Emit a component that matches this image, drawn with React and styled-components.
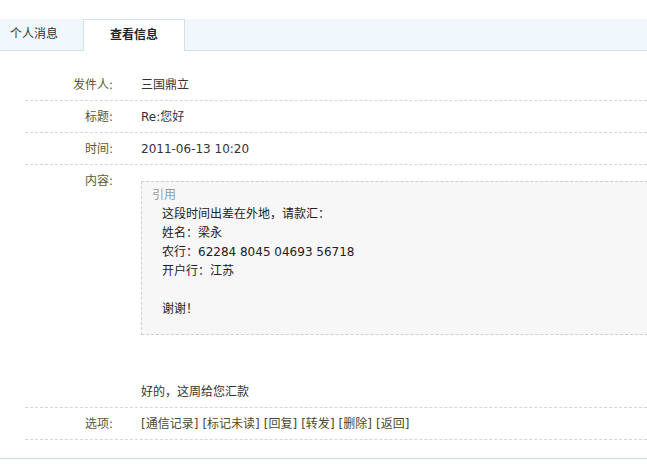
import React from "react";
import styled, { createGlobalStyle } from "styled-components";

const Global = createGlobalStyle`
  html, body { margin: 0; padding: 0; background: #fff; overflow: hidden; }
  body {
    font-family: "DejaVu Sans", "Noto Sans CJK SC", sans-serif;
    font-size: 12px;
    color: #333;
  }
`;

const Page = styled.div`
  width: 647px;
  padding-top: 19px;
`;

const TabBar = styled.div`
  display: flex;
  height: 31px;
  background: #f0f8fe;
  border-bottom: 1px solid #d7dee3;
`;

const Tab = styled.div`
  box-sizing: border-box;
  width: ${(p) => p.$w}px;
  line-height: 31px;
  height: ${(p) => (p.$active ? 32 : 31)}px;
  padding-left: ${(p) => (p.$active ? 0 : 10)}px;
  text-align: ${(p) => (p.$active ? "center" : "left")};
  font-weight: ${(p) => (p.$active ? "bold" : "normal")};
  color: ${(p) => (p.$active ? "#222" : "#333")};
  background: ${(p) => (p.$active ? "#fff" : "transparent")};
  border: ${(p) => (p.$active ? "1px solid #d4dfe6" : "none")};
  border-bottom: none;
`;

const Table = styled.div`
  margin: 18px 0 0 25px;
`;

const Row = styled.div`
  display: flex;
  align-items: flex-start;
  padding: 7px 0 6px;
  line-height: 18px;
  border-bottom: 1px dashed #d6d6d6;
`;

const Label = styled.div`
  flex: 0 0 88px;
  text-align: right;
  color: #5a5a32;
`;

const Value = styled.div`
  flex: 1;
  min-width: 0;
  overflow: hidden;
  padding-left: 28px;
  white-space: nowrap;
`;

const Quote = styled.div`
  margin-top: 9px;
  width: 540px;
  background: #f7f7f7;
  border: 1px dashed #cfcfcf;
  padding: 4px 10px 15px;
`;

const QuoteTitle = styled.div`
  color: #9a9a9a;
  line-height: 19px;
`;

const QuoteBody = styled.div`
  padding-left: 10px;
  line-height: 19px;
  color: #222;
`;

const Reply = styled.div`
  margin-top: 48px;
`;

const Links = styled.div`
  display: flex;
  gap: 4px;
`;

const Link = styled.a`
  color: #4a4a2a;
  text-decoration: none;
  cursor: pointer;
`;

const BottomRule = styled.div`
  margin-top: 18px;
  border-top: 1px solid #d2e3e3;
`;

const quoteLines = [
  "这段时间出差在外地，请款汇：",
  "姓名：梁永",
  "农行：62284 8045 04693 56718",
  "开户行：江苏",
  "\u00a0",
  "谢谢！",
];

const links = ["通信记录", "标记未读", "回复", "转发", "删除", "返回"];

export default function App() {
  return (
    <>
      <Global />
      <Page>
        <TabBar>
          <Tab $w={83}>个人消息</Tab>
          <Tab $w={102} $active>
            查看信息
          </Tab>
        </TabBar>
        <Table>
          <Row>
            <Label>发件人:</Label>
            <Value>三国鼎立</Value>
          </Row>
          <Row>
            <Label>标题:</Label>
            <Value>Re:您好</Value>
          </Row>
          <Row>
            <Label>时间:</Label>
            <Value>2011-06-13 10:20</Value>
          </Row>
          <Row>
            <Label>内容:</Label>
            <Value>
              <Quote>
                <QuoteTitle>引用</QuoteTitle>
                <QuoteBody>
                  {quoteLines.map((l, i) => (
                    <div key={i}>{l}</div>
                  ))}
                </QuoteBody>
              </Quote>
              <Reply>好的，这周给您汇款</Reply>
            </Value>
          </Row>
          <Row>
            <Label>选项:</Label>
            <Value>
              <Links>
                {links.map((l) => (
                  <Link key={l}>[{l}]</Link>
                ))}
              </Links>
            </Value>
          </Row>
        </Table>
        <BottomRule />
      </Page>
    </>
  );
}
